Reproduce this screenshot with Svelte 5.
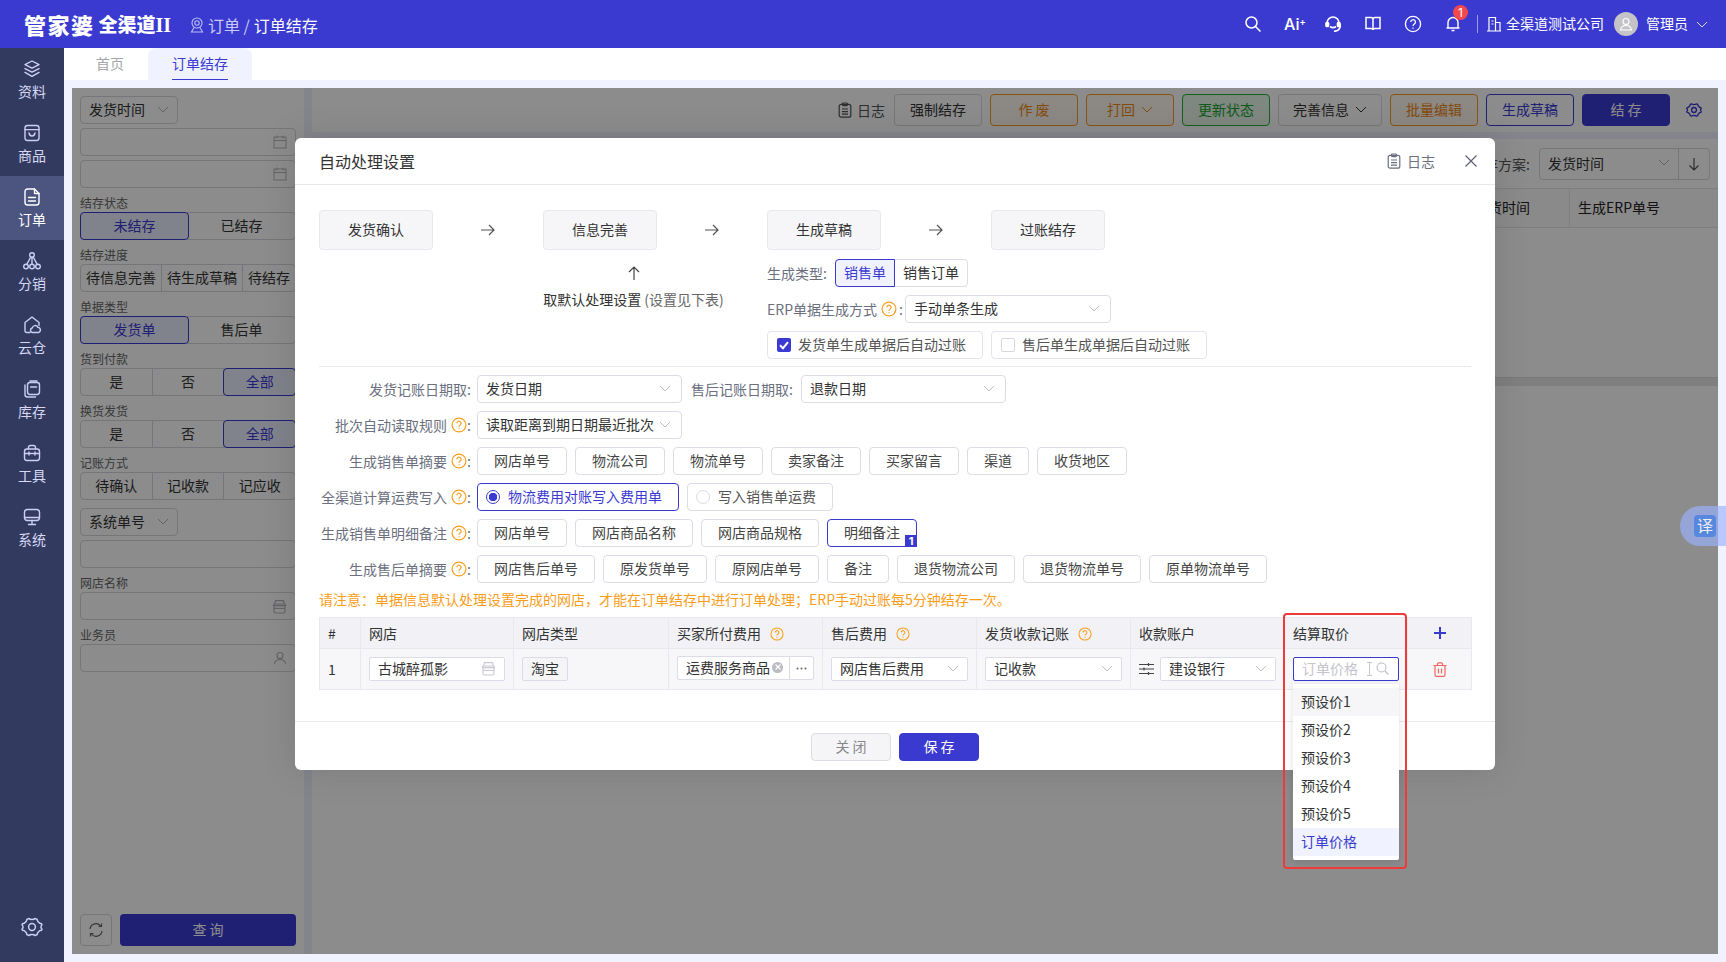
<script>
	const navItems = [
		{ label: '资料', icon: 'layers' },
		{ label: '商品', icon: 'goods' },
		{ label: '订单', icon: 'doc', active: true },
		{ label: '分销', icon: 'tree' },
		{ label: '云仓', icon: 'cloud' },
		{ label: '库存', icon: 'stock' },
		{ label: '工具', icon: 'tool' },
		{ label: '系统', icon: 'monitor' }
	];

	const toolbarBtns = [
		{ text: '强制结存', cls: '' },
		{ text: '作 废', cls: 'orange' },
		{ text: '打回', cls: 'orange', chevron: true },
		{ text: '更新状态', cls: 'green' },
		{ text: '完善信息', cls: 'wide', chevron: true },
		{ text: '批量编辑', cls: 'orange' },
		{ text: '生成草稿', cls: 'blue-line' },
		{ text: '结 存', cls: 'primary' }
	];

	const filterSegs = [
		{ label: '结存状态', opts: ['未结存', '已结存'], active: 0 },
		{ label: '结存进度', opts: ['待信息完善', '待生成草稿', '待结存'], active: -1, auto: true },
		{ label: '单据类型', opts: ['发货单', '售后单'], active: 0 },
		{ label: '货到付款', opts: ['是', '否', '全部'], active: 2 },
		{ label: '换货发货', opts: ['是', '否', '全部'], active: 2 },
		{ label: '记账方式', opts: ['待确认', '记收款', '记应收'], active: -1 }
	];

	const steps = ['发货确认', '信息完善', '生成草稿', '过账结存'];
	const salesTags = ['网店单号', '物流公司', '物流单号', '卖家备注', '买家留言', '渠道', '收货地区'];
	const detailTags = ['网店单号', '网店商品名称', '网店商品规格'];
	const afterTags = ['网店售后单号', '原发货单号', '原网店单号', '备注', '退货物流公司', '退货物流单号', '原单物流单号'];
	const priceOpts = ['预设价1', '预设价2', '预设价3', '预设价4', '预设价5', '订单价格'];
</script>

{#snippet chevron()}
	<svg class="chev" width="12" height="7" viewBox="0 0 12 7"><path d="M1 1l5 5 5-5" fill="none" stroke="currentColor" stroke-width="1" /></svg>
{/snippet}

{#snippet qmark(size = 16)}
	<svg class="qmark" width={size} height={size} viewBox="0 0 16 16" fill="none" stroke="#fa9d1b" stroke-width="1.2">
		<circle cx="8" cy="8" r="6.9" />
		<path d="M5.9 6.3a2.1 2.1 0 1 1 3.3 1.7c-.8.5-1.2.9-1.2 1.8" />
		<path d="M8 11.2v1.1" />
	</svg>
{/snippet}

{#snippet clip()}
	<svg width="14" height="16" viewBox="0 0 14 16" fill="none" stroke="currentColor" stroke-width="1.2">
		<rect x="1.2" y="2.4" width="11.6" height="12.8" rx="2" />
		<rect x="4.4" y="1" width="5.2" height="2.6" rx="1" />
		<path d="M4 7h6M4 9.6h6M4 12.2h6" />
	</svg>
{/snippet}

{#snippet shop(color = '#c9c9d2')}
	<svg width="15" height="15" viewBox="0 0 15 15" fill="none" stroke={color} stroke-width="1.1">
		<path d="M2.6 5l.9-3.4h8l.9 3.4" />
		<path d="M1.4 6.2c0-.8.4-1.2 1.2-1.2h9.8c.8 0 1.2.4 1.2 1.2v.4H1.4z" />
		<path d="M2 6.6v5.9c0 1 .5 1.5 1.5 1.5h8c1 0 1.5-.5 1.5-1.5V6.6" />
		<path d="M2 9.4h11" />
	</svg>
{/snippet}

{#snippet navIcon(name)}
	<svg width="20" height="20" viewBox="0 0 20 20" fill="none" stroke="#c9cff5" stroke-width="1.4" stroke-linejoin="round" stroke-linecap="round">
		{#if name === 'layers'}
			<path d="M10 2l7 3.6-7 3.6-7-3.6z" />
			<path d="M3 9.6l7 3.6 7-3.6" />
			<path d="M3 13.4l7 4 7-4" />
		{:else if name === 'goods'}
			<rect x="3" y="2.5" width="14" height="15" rx="2.4" />
			<path d="M3 6.6h14" />
			<path d="M7 10c.4 2 1.5 3 3 3s2.600-1 3-3" />
		{:else if name === 'doc'}
			<path d="M12.500 2H5.400A2.400 2.400 0 0 0 3 4.400v11.200A2.400 2.400 0 0 0 5.400 18h9.200a2.400 2.400 0 0 0 2.400-2.400V6.500z" stroke="#fff" />
			<path d="M12.500 2v4.500H17M6.500 10.500h7M6.500 14h7" stroke="#fff" />
		{:else if name === 'tree'}
			<circle cx="10" cy="4" r="2.300" />
			<circle cx="4" cy="15.500" r="2.300" />
			<circle cx="10" cy="15.500" r="2.300" />
			<circle cx="16" cy="15.500" r="2.300" />
			<path d="M10 6.300v6.900M8.800 6L4.800 13.300M11.200 6l4 7.300" />
		{:else if name === 'cloud'}
			<path d="M8 17.500H5a2 2 0 0 1-2-2V7.500L10 2l7 5.500v3" />
			<path d="M10.500 17.500a2.300 2.300 0 0 1-.3-4.500 3 3 0 0 1 5.700-.6 2.600 2.600 0 0 1 .6 5.100z" />
		{:else if name === 'stock'}
			<path d="M3 6v9.500A2.500 2.500 0 0 0 5.500 18h8" />
			<rect x="5.500" y="3.500" width="12" height="12" rx="2.400" />
			<path d="M8 2h7M8.500 8h6" />
		{:else if name === 'tool'}
			<rect x="2.500" y="6" width="15" height="11.500" rx="2.400" />
			<path d="M6.500 6V4.500a2 2 0 0 1 2-2h3a2 2 0 0 1 2 2V6" />
			<path d="M2.500 10.500h15M7 9v3M13 9v3" />
		{:else if name === 'monitor'}
			<rect x="2.500" y="2.500" width="15" height="11" rx="3" />
			<path d="M2.500 10.500h15M10 13.500v4M6.500 17.500h7" />
		{/if}
	</svg>
{/snippet}

<div class="page">
	<header class="topbar">
		<div class="logo"><span class="logo-main">管家婆</span><span class="logo-sub">全渠道<em>II</em></span></div>
		<div class="crumb">
			<svg width="14" height="16" viewBox="0 0 14 16" fill="none" stroke="#b9bdf0" stroke-width="1.1">
				<circle cx="7" cy="6" r="5" />
				<circle cx="7" cy="6" r="2.200" />
				<path d="M4 10.500l-2.500 4.500h11L10 10.500" />
			</svg>
			<span class="crumb-dim">订单 /</span>
			<span>订单结存</span>
		</div>
		<div class="top-right">
			<svg class="ti" width="18" height="18" viewBox="0 0 18 18" fill="none" stroke="#fff" stroke-width="1.500"><circle cx="7.500" cy="7.500" r="5.500" /><path d="M11.500 11.500l5 5" /></svg>
			<span class="ti ai">Ai<i>+</i></span>
			<svg class="ti" width="18" height="18" viewBox="0 0 18 18" fill="none" stroke="#fff" stroke-width="1.700"><path d="M3 10V8a6 6 0 0 1 12 0 5 5 0 0 1-5 8" /><rect x="2" y="7.500" width="2.500" height="4" rx="1" fill="#fff" /><rect x="13.500" y="7.500" width="2.500" height="4" rx="1" fill="#fff" /><path d="M6 11.500c2 1.500 4 1.500 6 0" /></svg>
			<svg class="ti" width="18" height="18" viewBox="0 0 18 18" fill="none" stroke="#fff" stroke-width="1.500"><path d="M2 2.500h5c1 0 2 .6 2 1.800V15c0-.8-1-1.400-2-1.400H2zM16 2.500h-5c-1 0-2 .6-2 1.800V15c0-.8 1-1.400 2-1.400h5z" /></svg>
			<svg class="ti" width="18" height="18" viewBox="0 0 18 18" fill="none" stroke="#fff" stroke-width="1.300"><circle cx="9" cy="9" r="7.600" /><path d="M6.800 7a2.300 2.300 0 1 1 3.500 2c-.9.600-1.300 1-1.300 2" /><path d="M9 12.500v1.200" /></svg>
			<span class="bell">
				<svg width="18" height="18" viewBox="0 0 18 18" fill="none" stroke="#fff" stroke-width="1.400"><path d="M4 13V7.500a5 5 0 0 1 10 0V13zM2.500 13h13M7.500 15.500h3" /></svg>
				<b class="dot">1</b>
			</span>
			<i class="vsep"></i>
			<svg class="building" width="16" height="16" viewBox="0 0 16 16" fill="none" stroke="#fff" stroke-width="1.200"><path d="M1 15h14M3 15V1.500h6.500V15M9.500 6.500H14V15M5.500 5h2M5.500 8h2" /></svg>
			<span class="company">全渠道测试公司</span>
			<span class="avatar">
				<svg width="14" height="14" viewBox="0 0 14 14" fill="none" stroke="#fff" stroke-width="1.100"><circle cx="7" cy="4.500" r="3" /><path d="M1.500 13c.5-3 2.500-4.500 5.500-4.500s5 1.500 5.500 4.500z" /></svg>
			</span>
			<span class="admin">管理员</span>
			{@render chevron()}
		</div>
	</header>

	<div class="shell">
		<nav class="sidebar">
			{#each navItems as item}
				<div class="nav-item" class:active={item.active}>
					{@render navIcon(item.icon)}
					<span>{item.label}</span>
				</div>
			{/each}
			<div class="nav-gear">
				<svg width="22" height="22" viewBox="0 0 22 22" fill="none" stroke="#c9cff5" stroke-width="1.500" stroke-linejoin="round">
					<path d="M8 2.500c1 1.400 5 1.400 6 0l2.200.9c-.3 1.700 2.500 4.500 4.200 4.200l.6 1.400c-1.400 1-1.400 3 0 4l-.6 1.400c-1.700-.3-4.500 2.500-4.200 4.200l-2.200.9c-1-1.400-5-1.400-6 0l-2.200-.9c.3-1.700-2.500-4.500-4.200-4.200L1 13c1.400-1 1.400-3 0-4l.6-1.400c1.700.3 4.500-2.500 4.200-4.200z" />
					<circle cx="11" cy="11" r="3.400" />
				</svg>
			</div>
		</nav>

		<div class="main">
			<div class="tabs">
				<span class="tab">首页</span>
				<span class="tab current"><em>订单结存</em></span>
			</div>
			<div class="content">
				<div class="stage">
					<aside class="filters">
						<div class="ctl sel short mb4">发货时间 {@render chevron()}</div>
						<div class="ctl date mb4">
							<svg width="14" height="14" viewBox="0 0 14 14" fill="none" stroke="#b5b5bb" stroke-width="1"><rect x="1" y="2" width="12" height="11" /><path d="M1 5.500h12M4 .5v3M10 .5v3" /></svg>
						</div>
						<div class="ctl date">
							<svg width="14" height="14" viewBox="0 0 14 14" fill="none" stroke="#b5b5bb" stroke-width="1"><rect x="1" y="2" width="12" height="11" /><path d="M1 5.500h12M4 .5v3M10 .5v3" /></svg>
						</div>
						{#each filterSegs as seg}
							<div class="f-label">{seg.label}</div>
							<div class="seg" class:auto={seg.auto}>
								{#each seg.opts as opt, i}
									<span class:on={i === seg.active}>{opt}</span>
								{/each}
							</div>
						{/each}
						<div class="ctl sel short mt8 mb4">系统单号 {@render chevron()}</div>
						<div class="ctl"></div>
						<div class="f-label">网店名称</div>
						<div class="ctl date">{@render shop('#b5b5bb')}</div>
						<div class="f-label">业务员</div>
						<div class="ctl date">
							<svg width="14" height="14" viewBox="0 0 14 14" fill="none" stroke="#b5b5bb" stroke-width="1.100"><circle cx="7" cy="4.500" r="3" /><path d="M1.500 13c.5-3 2.500-4.500 5.500-4.500s5 1.500 5.500 4.500" /></svg>
						</div>
						<div class="f-actions">
							<span class="refresh">
								<svg width="16" height="16" viewBox="0 0 16 16" fill="none" stroke="#666" stroke-width="1.200"><path d="M2 7a6 6 0 0 1 11-2.500M14 9a6 6 0 0 1-11 2.500" /><path d="M13.500 1.500v3h-3M2.500 14.500v-3h3" /></svg>
							</span>
							<span class="query">查 询</span>
						</div>
					</aside>

					<section class="right">
						<div class="toolbar">
							<span class="tool-log">{@render clip()} 日志</span>
							{#each toolbarBtns as b}
								<span class="t-btn {b.cls}">{b.text}{#if b.chevron}{@render chevron()}{/if}</span>
							{/each}
							<svg class="t-gear" width="16" height="16" viewBox="0 0 22 22" fill="none" stroke="#3a3ad1" stroke-width="1.800" stroke-linejoin="round">
								<path d="M8 2.500c1 1.400 5 1.400 6 0l2.200.9c-.3 1.700 2.500 4.500 4.200 4.200l.6 1.400c-1.400 1-1.400 3 0 4l-.6 1.400c-1.700-.3-4.500 2.500-4.200 4.200l-2.200.9c-1-1.400-5-1.400-6 0l-2.200-.9c.3-1.700-2.500-4.500-4.200-4.200L1 13c1.400-1 1.400-3 0-4l.6-1.400c1.700.3 4.500-2.500 4.200-4.200z" />
								<circle cx="11" cy="11" r="3.400" />
							</svg>
						</div>
						<div class="list">
							<div class="plan">
								<span>结存方案:</span>
								<div class="plan-sel">
									<span class="plan-val">发货时间 {@render chevron()}</span>
									<span class="plan-sort">
										<svg width="14" height="14" viewBox="0 0 14 14" fill="none" stroke="#555" stroke-width="1.200"><path d="M7 1v12M2.500 8.500L7 13l4.500-4.500" /></svg>
									</span>
								</div>
							</div>
							<div class="list-head">
								<span class="c1">发货时间</span>
								<span class="c2">生成ERP单号</span>
							</div>
							<div class="list-body"></div>
							<div class="list-bar"></div>
						</div>
					</section>

					<div class="mask"></div>

					<div class="modal">
						<div class="m-head">
							<span class="m-title">自动处理设置</span>
							<span class="m-log">{@render clip()} 日志</span>
							<svg class="m-close" width="12" height="12" viewBox="0 0 12 12" fill="none" stroke="#5f6274" stroke-width="1.200"><path d="M.5.5l11 11M11.500.5l-11 11" /></svg>
						</div>

						<div class="m-body">
							<div class="steps">
								{#each steps as s, i}
									<div class="step">{s}</div>
									{#if i < steps.length - 1}
										<div class="arrow">
											<svg width="14" height="12" viewBox="0 0 14 12" fill="none" stroke="#555" stroke-width="1.200"><path d="M0 6h13M8 1l5 5-5 5" /></svg>
										</div>
									{/if}
								{/each}
							</div>

							<div class="below">
								<div class="default-note">
									<svg width="12" height="14" viewBox="0 0 12 14" fill="none" stroke="#444" stroke-width="1.200"><path d="M6 14V1M1 6l5-5 5 5" /></svg>
									<p>取默认处理设置 <span>(设置见下表)</span></p>
								</div>
								<div class="draft">
									<div class="draft-row">
										<span class="lbl">生成类型:</span>
										<div class="m-seg"><span class="on">销售单</span><span>销售订单</span></div>
									</div>
									<div class="draft-row">
										<span class="lbl erp-lbl">ERP单据生成方式{@render qmark()}:</span>
										<div class="m-sel erp">手动单条生成 {@render chevron()}</div>
									</div>
									<div class="draft-row checks">
										<label class="chk">
											<i class="box on">
												<svg width="14" height="14" viewBox="0 0 14 14" fill="none" stroke="#fff" stroke-width="2"><path d="M3 7.200l3 3 5-6" /></svg>
											</i>
											发货单生成单据后自动过账
										</label>
										<label class="chk"><i class="box"></i>售后单生成单据后自动过账</label>
									</div>
								</div>
							</div>

							<div class="rule"></div>

							<div class="form">
								<div class="f-row">
									<span class="f-lbl">发货记账日期取:</span>
									<div class="m-sel">发货日期 {@render chevron()}</div>
									<span class="f-lbl2">售后记账日期取:</span>
									<div class="m-sel">退款日期 {@render chevron()}</div>
								</div>
								<div class="f-row">
									<span class="f-lbl">批次自动读取规则{@render qmark()}:</span>
									<div class="m-sel">读取距离到期日期最近批次 {@render chevron()}</div>
								</div>
								<div class="f-row">
									<span class="f-lbl">生成销售单摘要{@render qmark()}:</span>
									{#each salesTags as t}<span class="tag">{t}</span>{/each}
								</div>
								<div class="f-row">
									<span class="f-lbl">全渠道计算运费写入{@render qmark()}:</span>
									<label class="radio on"><i></i>物流费用对账写入费用单</label>
									<label class="radio"><i></i>写入销售单运费</label>
								</div>
								<div class="f-row">
									<span class="f-lbl">生成销售单明细备注{@render qmark()}:</span>
									{#each detailTags as t}<span class="tag">{t}</span>{/each}
									<span class="tag picked">明细备注<b>1</b></span>
								</div>
								<div class="f-row">
									<span class="f-lbl">生成售后单摘要{@render qmark()}:</span>
									{#each afterTags as t}<span class="tag">{t}</span>{/each}
								</div>
							</div>

							<p class="notice">请注意：单据信息默认处理设置完成的网店，才能在订单结存中进行订单处理；ERP手动过账每5分钟结存一次。</p>

							<table class="grid">
								<colgroup>
									<col style="width:41px" /><col style="width:153px" /><col style="width:155px" /><col style="width:154px" /><col style="width:154px" /><col style="width:154px" /><col style="width:154px" /><col style="width:123px" /><col style="width:64px" />
								</colgroup>
								<thead>
									<tr>
										<th>#</th>
										<th>网店</th>
										<th>网店类型</th>
										<th>买家所付费用{@render qmark(14)}</th>
										<th>售后费用{@render qmark(14)}</th>
										<th>发货收款记账{@render qmark(14)}</th>
										<th>收款账户</th>
										<th>结算取价</th>
										<th class="mid">
											<svg width="12" height="12" viewBox="0 0 12 12" stroke="#3a3ad1" stroke-width="2"><path d="M6 0v12M0 6h12" /></svg>
										</th>
									</tr>
								</thead>
								<tbody>
									<tr>
										<td>1</td>
										<td><div class="c-in spread">古城醉孤影 {@render shop()}</div></td>
										<td><span class="c-tag">淘宝</span></td>
										<td>
											<div class="c-in fee">
												<span class="fee-val">运费服务商品<i class="x"><svg width="8" height="8" viewBox="0 0 8 8" stroke="#fff" stroke-width="1.100"><path d="M1.500 1.500l5 5M6.500 1.500l-5 5" /></svg></i></span>
												<span class="more">
													<svg width="11" height="3" viewBox="0 0 11 3" fill="#666"><circle cx="1.500" cy="1.500" r="1" /><circle cx="5.500" cy="1.500" r="1" /><circle cx="9.500" cy="1.500" r="1" /></svg>
												</span>
											</div>
										</td>
										<td><div class="c-in spread">网店售后费用 {@render chevron()}</div></td>
										<td><div class="c-in spread">记收款 {@render chevron()}</div></td>
										<td>
											<div class="acct">
												<svg width="15" height="14" viewBox="0 0 15 14" fill="none" stroke="#444" stroke-width="1.200"><path d="M0 2.500h15M0 7h15M0 11.500h15" /><path d="M9.500 1v3M5 5.500v3M9.500 10v3" /></svg>
												<div class="c-in spread">建设银行 {@render chevron()}</div>
											</div>
										</td>
										<td>
											<div class="c-in search">
												<span>订单价格</span>
												<svg class="beam" width="5" height="14" viewBox="0 0 5 14" fill="none" stroke="#c8c8c8"><path d="M0 .5h5M0 13.500h5M2.500 .5v13" /></svg>
												<svg width="13" height="13" viewBox="0 0 13 13" fill="none" stroke="#bdbdc6" stroke-width="1.100"><circle cx="5.500" cy="5.500" r="4.500" /><path d="M9 9l3.500 3.500" /></svg>
											</div>
										</td>
										<td class="mid">
											<svg width="14" height="15" viewBox="0 0 14 15" fill="none" stroke="#f0655f" stroke-width="1.200"><path d="M.5 3.500h13M4.500 3.500V1.800c0-.6.4-1 1-1h3c.6 0 1 .4 1 1v1.700M2 3.500v9.200c0 1 .6 1.600 1.600 1.600h6.800c1 0 1.600-.6 1.600-1.600V3.500M5.500 6.500v5M8.500 6.500v5" /></svg>
										</td>
									</tr>
								</tbody>
							</table>
						</div>

						<div class="m-foot">
							<span class="f-btn">关 闭</span>
							<span class="f-btn save">保 存</span>
						</div>

						<div class="dropdown">
							{#each priceOpts as p, i}
								<div class="opt" class:hover={i === 0} class:picked={i === 5}>{p}</div>
							{/each}
						</div>
						<div class="red-box"></div>
					</div>
				</div>
			</div>
		</div>
	</div>

	<div class="translate"><span>译</span></div>
</div>

<style>
	:global(body) {
		margin: 0;
		font-family: "Noto Sans CJK SC", "Noto Sans", sans-serif;
		font-size: 14px;
		color: #333;
	}

	p { margin: 0; }
	i, em { font-style: normal; }

	.page {
		width: 1726px;
		height: 962px;
		overflow: hidden;
		display: flex;
		flex-direction: column;
		position: relative;
		background: #f0f2ff;
	}

	/* top bar */
	.topbar {
		height: 48px;
		flex: none;
		background: #3a3ad1;
		color: #fff;
		display: flex;
		align-items: center;
		padding-left: 24px;
		box-sizing: border-box;
	}

	.logo {
		width: 166px;
		display: flex;
		align-items: flex-end;
		font-weight: 900;
		line-height: 24px;
	}

	.logo-main { font-size: 22px; letter-spacing: 1.5px; }
	.logo-sub { font-size: 19px; margin-left: 4px; line-height: 22px; white-space: nowrap; }
	.logo-sub em { font-family: "Liberation Serif", serif; font-size: 20px; font-weight: 700; }

	.crumb {
		display: flex;
		align-items: center;
		gap: 4px;
		font-size: 16px;
		color: #fff;
		padding-top: 2px;
	}

	.crumb-dim { color: #c9cbf5; }

	.top-right {
		margin-left: auto;
		display: flex;
		align-items: center;
		position: relative;
		width: 482px;
		height: 48px;
	}

	.top-right > * { flex: none; }

	.ti { margin-right: 22px; }
	.ai { width: 18px; font-size: 16px; font-weight: 500; line-height: 18px; position: relative; font-family: "Inter", sans-serif; }
	.ai i { position: absolute; font-size: 10px; top: -3px; right: -4px; }

	.bell { position: relative; width: 18px; height: 18px; margin-right: 15px; display: block; }

	.dot {
		position: absolute;
		left: 9px;
		top: -10px;
		width: 15px;
		height: 15px;
		border-radius: 50%;
		background: #f2484b;
		font: 400 12px/15px "Inter", sans-serif;
		text-align: center;
	}

	.vsep { width: 1px; height: 18px; background: #9c9ce6; margin-right: 8px; }
	.building { margin-right: 4px; }
	.company { width: 98px; margin-right: 10px; white-space: nowrap; padding-bottom: 2px; }

	.avatar {
		width: 24px;
		height: 24px;
		border-radius: 50%;
		background: #c4c4c8;
		display: flex;
		align-items: center;
		justify-content: center;
		margin-right: 8px;
	}

	.admin { margin-right: 8px; padding-bottom: 2px; }
	.top-right .chev { color: #d6d6f6; }

	/* sidebar */
	.shell { flex: 1; display: flex; min-height: 0; }

	.sidebar {
		width: 64px;
		flex: none;
		background: #333a5f;
		display: flex;
		flex-direction: column;
	}

	.nav-item {
		height: 64px;
		box-sizing: border-box;
		padding-top: 11px;
		display: flex;
		flex-direction: column;
		align-items: center;
		gap: 2px;
		color: #d5d9f5;
		line-height: 21px;
	}

	.nav-item.active { background: #4b5580; color: #fff; }

	.nav-gear {
		margin-top: auto;
		height: 46px;
		display: flex;
		justify-content: center;
	}

	/* tabs */
	.main { flex: 1; min-width: 0; display: flex; flex-direction: column; }

	.tabs {
		height: 32px;
		flex: none;
		background: #fff;
		display: flex;
		padding-left: 32px;
		gap: 24px;
		line-height: 30px;
	}

	.tab { color: #a5a5ad; }

	.tab.current {
		width: 104px;
		text-align: center;
		background: #f0f2ff;
		border-radius: 8px 8px 0 0;
		color: #3a3ad1;
	}

	.tab.current em { display: inline-block; height: 31px; border-bottom: 1px solid #3a3ad1; }

	.content { flex: 1; padding: 8px 8px 8px 8px; min-height: 0; }
	.stage { position: relative; height: 866px; display: flex; gap: 8px; }

	/* left filters */
	.filters {
		width: 232px;
		flex: none;
		box-sizing: border-box;
		background: #fff;
		padding: 8px 8px 8px;
		display: flex;
		flex-direction: column;
		font-size: 14px;
	}

	.ctl {
		height: 28px;
		flex: none;
		box-sizing: border-box;
		border: 1px solid #d8d8de;
		border-radius: 4px;
		background: #fff;
		display: flex;
		align-items: center;
	}

	.sel { padding: 0 8px 2px; justify-content: space-between; color: #333; }
	.short { width: 98px; }
	.mt8 { margin-top: 8px; }
	.mb4 { margin-bottom: 4px; }
	.date { justify-content: flex-end; padding-right: 8px; }
	.sel .chev { color: #b4b4bc; }

	.f-label { height: 24px; flex: none; font-size: 12px; line-height: 30px; color: #666; }

	.seg {
		height: 28px;
		flex: none;
		display: flex;
		box-sizing: border-box;
		border: 1px solid #d8d8de;
		border-radius: 4px;
	}

	.seg span {
		flex: 1 1 0;
		text-align: center;
		line-height: 24px;
		white-space: nowrap;
		border-right: 1px solid #d8d8de;
	}

	.seg.auto span { flex: none; width: 80px; }
	.seg.auto span:last-child { flex: 1; }
	.seg span:last-child { border-right: 0; }

	.seg span.on {
		background: #eceeff;
		color: #3a3ad1;
		outline: 1px solid #3a3ad1;
		outline-offset: -1px;
		margin: -1px;
		padding: 1px;
		border-right: 0;
		border-radius: 4px;
	}

	.f-actions { margin-top: auto; display: flex; gap: 8px; }

	.refresh {
		width: 32px;
		height: 32px;
		box-sizing: border-box;
		border: 1px solid #d8d8de;
		border-radius: 4px;
		display: flex;
		align-items: center;
		justify-content: center;
	}

	.query {
		flex: 1;
		height: 32px;
		border-radius: 4px;
		background: #3a3ad1;
		color: #fff;
		text-align: center;
		line-height: 30px;
	}

	/* right panel */
	.right { flex: 1; min-width: 0; display: flex; flex-direction: column; gap: 7px; }

	.toolbar {
		height: 44px;
		flex: none;
		background: #fff;
		display: flex;
		align-items: center;
		justify-content: flex-end;
		gap: 8px;
		padding-right: 16px;
	}

	.tool-log { display: flex; align-items: center; gap: 5px; color: #555; margin-right: 1px; }

	.t-btn {
		width: 88px;
		height: 32px;
		box-sizing: border-box;
		border: 1px solid #d8d8de;
		border-radius: 4px;
		display: flex;
		align-items: center;
		justify-content: center;
		gap: 6px;
		color: #333;
		padding-bottom: 2px;
	}

	.t-btn.wide { width: 104px; }
	.t-btn.orange { border-color: #f99a1c; color: #f0891a; background: #fff8ee; }
	.t-btn.green { border-color: #1fb532; color: #17a32c; background: #e8f8ea; }
	.t-btn.blue-line { border-color: #3a3ad1; color: #3a3ad1; }
	.t-btn.primary { background: #3a3ad1; border-color: #3a3ad1; color: #fff; }
	.t-gear { margin-left: 8px; }

	.list { flex: 1; background: #fff; display: flex; flex-direction: column; }

	.plan {
		height: 49px;
		flex: none;
		display: flex;
		align-items: center;
		justify-content: flex-end;
		gap: 9px;
		padding-right: 8px;
		color: #555;
	}

	.plan-sel {
		width: 171px;
		height: 32px;
		box-sizing: border-box;
		border: 1px solid #d8d8de;
		border-radius: 4px;
		display: flex;
	}

	.plan-val { flex: 1; display: flex; align-items: center; justify-content: space-between; padding: 0 8px 2px; border-right: 1px solid #d8d8de; color: #333; }
	.plan-val .chev { color: #b4b4bc; }
	.plan-sort { width: 30px; display: flex; align-items: center; justify-content: center; }

	.list-head {
		height: 40px;
		flex: none;
		box-sizing: border-box;
		border-top: 1px solid #e6e6e6;
		border-bottom: 1px solid #e6e6e6;
		display: flex;
		justify-content: flex-end;
		background: #fbfbfb;
		line-height: 36px;
		color: #222;
	}

	.c1 { width: 104px; padding-left: 8px; box-sizing: border-box; border-right: 1px solid #e6e6e6; }
	.c2 { width: 148px; padding-left: 8px; box-sizing: border-box; }

	.list-body { height: 149px; flex: none; }
	.list-bar { height: 9px; flex: none; background: #e7e8e8; border-top: 1px solid #dcdcdc; box-sizing: border-box; }

	/* modal */
	.mask {
		position: absolute;
		inset: 0;
		background: rgba(0, 0, 0, 0.45);
	}

	.modal {
		position: absolute;
		left: 223px;
		top: 50px;
		width: 1200px;
		height: 632px;
		background: #fff;
		border-radius: 6px;
		box-shadow: 0 0 36px rgba(0, 0, 0, 0.12);
		display: flex;
		flex-direction: column;
	}

	.m-head {
		height: 46px;
		flex: none;
		border-bottom: 1px solid #e8e8ec;
		display: flex;
		align-items: center;
		padding: 0 18px 0 24px;
	}

	.m-title { font-size: 16px; color: #333; padding-bottom: 1px; }
	.m-log { margin-left: auto; display: flex; align-items: center; gap: 6px; color: #6b6f80; }
	.m-close { margin-left: 30px; }

	.m-body { flex: 1; padding: 25px 24px 0; }

	.steps { display: flex; }

	.step {
		width: 114px;
		height: 40px;
		box-sizing: border-box;
		background: #f6f6f9;
		border: 1px solid #e8e8ee;
		border-radius: 4px;
		text-align: center;
		line-height: 36px;
		color: #333;
	}

	.arrow { width: 110px; display: flex; align-items: center; justify-content: center; }

	.below { display: flex; height: 100px; padding-top: 9px; padding-bottom: 7px; }

	.default-note {
		width: 181px;
		margin-left: 224px;
		text-align: center;
		color: #333;
		padding-top: 7px;
	}

	.default-note svg { display: block; margin: 0 auto; }
	.default-note p { margin-top: 9px; white-space: nowrap; line-height: 20px; }
	.default-note span { color: #666; }

	.draft { margin-left: 43px; display: flex; flex-direction: column; gap: 8px; }
	.draft-row { display: flex; align-items: center; height: 28px; }

	.lbl { color: #6b6f80; display: flex; align-items: center; margin-right: 8px; white-space: nowrap; padding-bottom: 1px; }
	.lbl.erp-lbl { margin-right: 2px; }
	.lbl .qmark { flex: none; margin: 1px 2px 0 4px; }

	.m-seg {
		display: flex;
		height: 28px;
		box-sizing: border-box;
		border: 1px solid #dcdce6;
		border-radius: 4px;
		line-height: 24px;
	}

	.m-seg span { padding: 0 8px; color: #333; white-space: nowrap; }

	.m-seg span.on {
		margin: -1px 0 -1px -1px;
		border: 1px solid #3a3ad1;
		border-radius: 4px 0 0 4px;
		background: #f0f2ff;
		color: #3a3ad1;
		padding: 0 8px;
	}

	.m-sel {
		width: 205px;
		height: 28px;
		flex: none;
		box-sizing: border-box;
		border: 1px solid #dcdce6;
		border-radius: 4px;
		padding: 0 10px 2px 8px;
		display: flex;
		align-items: center;
		justify-content: space-between;
		white-space: nowrap;
		color: #333;
	}

	.m-sel .chev, .c-in .chev { color: #b9bdc8; }
	.m-sel.erp { width: 206px; }

	.checks { gap: 8px; }

	.chk {
		height: 28px;
		box-sizing: border-box;
		border: 1px solid #e4e4ec;
		border-radius: 4px;
		padding: 0 16px 2px 9px;
		display: flex;
		align-items: center;
		gap: 7px;
		color: #555;
		white-space: nowrap;
	}

	.box {
		width: 14px;
		height: 14px;
		box-sizing: border-box;
		border: 1px solid #d8d8e0;
		border-radius: 2px;
		display: block;
		flex: none;
		margin-top: 2px;
	}

	.box.on { border: 0; background: #3a3ad1; }
	.box.on svg { display: block; }

	.rule { height: 1px; background: #e8e8ec; }

	.form { margin-top: 8px; display: flex; flex-direction: column; gap: 8px; }
	.f-row { height: 28px; display: flex; align-items: center; gap: 8px; }

	.f-lbl {
		width: 152px;
		margin-right: -2px;
		flex: none;
		color: #6b6f80;
		display: flex;
		align-items: center;
		justify-content: flex-end;
		white-space: nowrap;
		padding-bottom: 1px;
	}

	.f-lbl .qmark { flex: none; margin: 1px 0 0 4px; }

	.f-lbl2 { color: #6b6f80; margin: 0 0 1px 1px; white-space: nowrap; }

	.tag {
		height: 28px;
		box-sizing: border-box;
		border: 1px solid #dcdce6;
		border-radius: 4px;
		padding: 0 16px;
		line-height: 24px;
		color: #444;
		white-space: nowrap;
		position: relative;
	}

	.tag.picked { border-color: #3a3ad1; }

	.tag b {
		position: absolute;
		right: -1px;
		bottom: -1px;
		width: 12px;
		height: 12px;
		background: #3a3ad1;
		color: #fff;
		font: 700 11px/12px "Inter", sans-serif;
		text-align: center;
	}

	.radio {
		height: 28px;
		box-sizing: border-box;
		border: 1px solid #dcdce6;
		border-radius: 4px;
		padding: 0 16px 2px 8px;
		display: flex;
		align-items: center;
		gap: 8px;
		color: #555;
		white-space: nowrap;
	}

	.radio i {
		width: 14px;
		height: 14px;
		box-sizing: border-box;
		border: 1px solid #dcdce6;
		border-radius: 50%;
		margin-top: 2px;
	}

	.radio.on { border-color: #3a3ad1; color: #3a3ad1; }
	.radio.on i { border-color: #3a3ad1; background: radial-gradient(circle, #3a3ad1 0 4px, #fff 4.5px); }

	.notice { margin-top: 7px; height: 20px; line-height: 18px; color: #fa9d1b; }

	.grid {
		margin-top: 7px;
		width: 1152px;
		table-layout: fixed;
		border-collapse: collapse;
	}

	.grid th, .grid td {
		border: 1px solid #e8e8ee;
		padding: 0 8px;
		text-align: left;
		font-weight: 400;
		white-space: nowrap;
	}

	.grid th { height: 29px; line-height: 20px; background: #f2f2f6; color: #333; padding-bottom: 1px; }
	.grid td { height: 40px; background: #f7f7fa; }
	.grid .mid { text-align: center; padding: 0; line-height: 0; }
	.grid .mid svg { vertical-align: middle; }
	.grid th .qmark { vertical-align: -2px; margin-left: 9px; }

	.c-in {
		height: 24px;
		box-sizing: border-box;
		background: #fff;
		border: 1px solid #dcdce6;
		border-radius: 2px;
		padding: 0 8px 2px;
		display: flex;
		align-items: center;
		color: #333;
	}

	.spread { justify-content: space-between; }

	.c-tag {
		display: inline-block;
		height: 24px;
		box-sizing: border-box;
		background: #f5f5f7;
		border: 1px solid #dcdce6;
		border-radius: 2px;
		padding: 0 8px;
		line-height: 20px;
		vertical-align: middle;
	}

	.fee { padding: 0; margin-top: -2px; }
	.fee-val { flex: 1; display: flex; align-items: center; padding: 0 0 2px 8px; gap: 2px; }

	.x {
		width: 11px;
		height: 11px;
		border-radius: 50%;
		background: #bcbcc4;
		display: flex;
		align-items: center;
		justify-content: center;
	}

	.more {
		width: 23px;
		height: 22px;
		border-left: 1px solid #dcdce6;
		display: flex;
		align-items: center;
		justify-content: center;
	}

	.acct { display: flex; align-items: center; gap: 6px; }
	.acct .c-in { flex: 1; }

	.search { border-color: #3a3ad1; color: #c4c4cc; padding-right: 9px; position: relative; }
	.search span { flex: 1; }
	.beam { position: absolute; left: 73px; top: 4px; }

	.m-foot {
		height: 37px;
		flex: none;
		border-top: 1px solid #e8e8ec;
		display: flex;
		justify-content: center;
		gap: 8px;
		padding-top: 11px;
	}

	.f-btn {
		width: 80px;
		height: 28px;
		box-sizing: border-box;
		border: 1px solid #dcdce4;
		border-radius: 4px;
		background: #f5f5f8;
		text-align: center;
		line-height: 24px;
		color: #888;
	}

	.f-btn.save { background: #3a3ad1; border-color: #3a3ad1; color: #fff; }

	.dropdown {
		position: absolute;
		left: 998px;
		top: 546px;
		width: 106px;
		height: 176px;
		box-sizing: border-box;
		padding: 4px 0;
		background: #fff;
		border-radius: 2px;
		box-shadow: 0 2px 8px rgba(0, 0, 0, 0.12);
	}

	.opt { height: 28px; line-height: 26px; padding-left: 8px; color: #333; }
	.opt.hover { background: #f6f6f8; }
	.opt.picked { background: #f0f2ff; color: #3a3ad1; }

	.red-box {
		position: absolute;
		left: 988px;
		top: 475px;
		width: 124px;
		height: 256px;
		box-sizing: border-box;
		border: 2px solid #f03a3a;
		border-radius: 4px;
		pointer-events: none;
	}

	.translate {
		position: absolute;
		right: 0;
		top: 506px;
		width: 46px;
		height: 40px;
		border-radius: 20px 0 0 20px;
		background: rgba(155, 178, 255, 0.65);
		display: flex;
		align-items: center;
		padding-left: 14px;
		box-sizing: border-box;
	}

	.translate span {
		width: 22px;
		height: 22px;
		border-radius: 4px;
		background: #5788e0;
		color: #eee;
		text-align: center;
		line-height: 20px;
		font-size: 16px;
	}
</style>
